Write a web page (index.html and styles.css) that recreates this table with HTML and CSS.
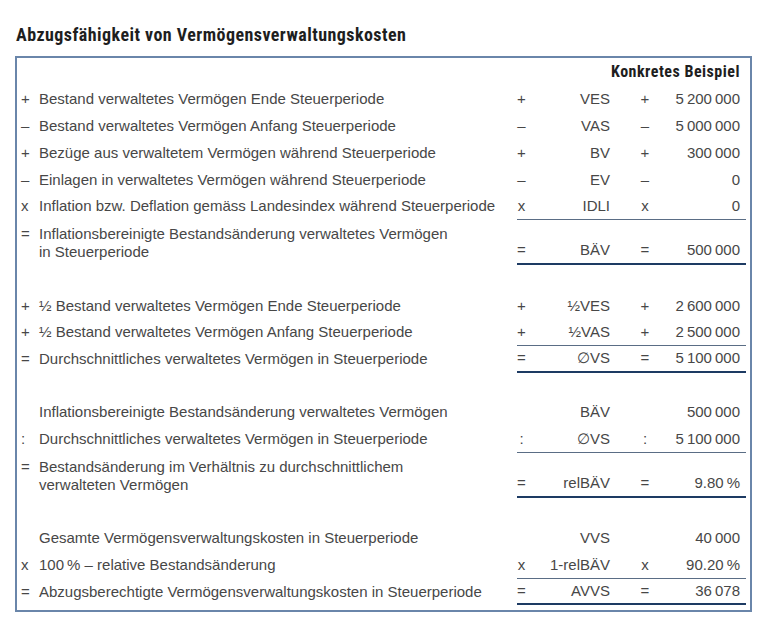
FILE: index.html
```html
<!DOCTYPE html>
<html lang="de">
<head>
<meta charset="utf-8">
<title>Abzugsfähigkeit von Vermögensverwaltungskosten</title>
<link rel="stylesheet" href="styles.css">
</head>
<body>
<h1 class="title">Abzugsfähigkeit von Vermögensverwaltungskosten</h1>
<div class="box">
  <div class="head">Konkretes Beispiel</div>

  <div class="row"><span class="sg">+</span><span class="lbl">Bestand verwaltetes Vermögen Ende Steuerperiode</span>
    <div class="calc"><span class="o1">+</span><span class="sym">VES</span><span class="o2">+</span><span class="val">5&thinsp;200&thinsp;000</span></div></div>
  <div class="row"><span class="sg">–</span><span class="lbl">Bestand verwaltetes Vermögen Anfang Steuerperiode</span>
    <div class="calc"><span class="o1">–</span><span class="sym">VAS</span><span class="o2">–</span><span class="val">5&thinsp;000&thinsp;000</span></div></div>
  <div class="row"><span class="sg">+</span><span class="lbl">Bezüge aus verwaltetem Vermögen während Steuerperiode</span>
    <div class="calc"><span class="o1">+</span><span class="sym">BV</span><span class="o2">+</span><span class="val">300&thinsp;000</span></div></div>
  <div class="row"><span class="sg">–</span><span class="lbl">Einlagen in verwaltetes Vermögen während Steuerperiode</span>
    <div class="calc"><span class="o1">–</span><span class="sym">EV</span><span class="o2">–</span><span class="val">0</span></div></div>
  <div class="row u"><span class="sg">x</span><span class="lbl">Inflation bzw. Deflation gemäss Landesindex während Steuerperiode</span>
    <div class="calc"><span class="o1">x</span><span class="sym">IDLI</span><span class="o2">x</span><span class="val">0</span></div></div>
  <div class="row two uu"><span class="sg">=</span><span class="lbl">Inflationsbereinigte Bestandsänderung verwaltetes Vermögen<br>in Steuerperiode</span>
    <div class="calc"><span class="o1">=</span><span class="sym">BÄV</span><span class="o2">=</span><span class="val">500&thinsp;000</span></div></div>

  <div class="gap g1"></div>

  <div class="row"><span class="sg">+</span><span class="lbl">½ Bestand verwaltetes Vermögen Ende Steuerperiode</span>
    <div class="calc"><span class="o1">+</span><span class="sym">½VES</span><span class="o2">+</span><span class="val">2&thinsp;600&thinsp;000</span></div></div>
  <div class="row u"><span class="sg">+</span><span class="lbl">½ Bestand verwaltetes Vermögen Anfang Steuerperiode</span>
    <div class="calc"><span class="o1">+</span><span class="sym">½VAS</span><span class="o2">+</span><span class="val">2&thinsp;500&thinsp;000</span></div></div>
  <div class="row uu"><span class="sg">=</span><span class="lbl">Durchschnittliches verwaltetes Vermögen in Steuerperiode</span>
    <div class="calc"><span class="o1">=</span><span class="sym">∅VS</span><span class="o2">=</span><span class="val">5&thinsp;100&thinsp;000</span></div></div>

  <div class="gap g2"></div>

  <div class="row"><span class="sg"></span><span class="lbl">Inflationsbereinigte Bestandsänderung verwaltetes Vermögen</span>
    <div class="calc"><span class="o1"></span><span class="sym">BÄV</span><span class="o2"></span><span class="val">500&thinsp;000</span></div></div>
  <div class="row u"><span class="sg">:</span><span class="lbl">Durchschnittliches verwaltetes Vermögen in Steuerperiode</span>
    <div class="calc"><span class="o1">:</span><span class="sym">∅VS</span><span class="o2">:</span><span class="val">5&thinsp;100&thinsp;000</span></div></div>
  <div class="row two uu"><span class="sg">=</span><span class="lbl">Bestandsänderung im Verhältnis zu durchschnittlichem<br>verwalteten Vermögen</span>
    <div class="calc"><span class="o1">=</span><span class="sym">relBÄV</span><span class="o2">=</span><span class="val">9.80&thinsp;%</span></div></div>

  <div class="gap g3"></div>

  <div class="row"><span class="sg"></span><span class="lbl">Gesamte Vermögensverwaltungskosten in Steuerperiode</span>
    <div class="calc"><span class="o1"></span><span class="sym">VVS</span><span class="o2"></span><span class="val">40&thinsp;000</span></div></div>
  <div class="row u"><span class="sg">x</span><span class="lbl">100&thinsp;% – relative Bestandsänderung</span>
    <div class="calc"><span class="o1">x</span><span class="sym">1-relBÄV</span><span class="o2">x</span><span class="val">90.20&thinsp;%</span></div></div>
  <div class="row uu"><span class="sg">=</span><span class="lbl">Abzugsberechtigte Vermögensverwaltungskosten in Steuerperiode</span>
    <div class="calc"><span class="o1">=</span><span class="sym">AVVS</span><span class="o2">=</span><span class="val">36&thinsp;078</span></div></div>
</div>
</body>
</html>
```
FILE: styles.css
```css
html, body {
  margin: 0;
  padding: 0;
  background: #ffffff;
}

body {
  font-family: "Liberation Sans", Arial, sans-serif;
  font-size: 15px;
  color: #474747;
}

.title {
  margin: 0 0 0 16px;
  padding-top: 24px;
  font-family: "Roboto Condensed", "Liberation Sans", sans-serif;
  font-weight: 700;
  font-size: 18px;
  letter-spacing: 0.45px;
  line-height: 22px;
  color: #1e1e1e;
}

.box {
  margin: 10px 0 0 15px;
  width: 737px;
  box-sizing: border-box;
  border: 2px solid #6a86aa;
  padding: 0 4px 5px 4px;
}

.head {
  height: 28px;
  line-height: 28px;
  text-align: right;
  padding-right: 6px;
  font-family: "Roboto Condensed", "Liberation Sans", sans-serif;
  font-weight: 700;
  font-size: 16px;
  letter-spacing: 0.5px;
  color: #1e1e1e;
}

.row {
  display: grid;
  grid-template-columns: 18px 1fr 229px;
  height: 26.75px;
  box-sizing: border-box;
  line-height: 18px;
}

.sg,
.lbl {
  align-self: center;
  white-space: nowrap;
}

.calc {
  display: grid;
  grid-template-columns: 9px 84px 60px 1fr;
  align-items: center;
  box-sizing: border-box;
  height: 26.75px;
  padding-right: 6px;
  white-space: nowrap;
  align-self: end;
}

.o1 {
  text-align: center;
}

.sym {
  text-align: right;
}

.o2 {
  text-align: center;
  padding-left: 10px;
}

.val {
  text-align: right;
}

.row.u .calc {
  border-bottom: 1px solid #5a6d85;
}

.row.uu .calc {
  border-bottom: 2px solid #1d3b63;
}

.row.two {
  height: 45px;
}

.row.two .sg,
.row.two .lbl {
  align-self: start;
  padding-top: 5px;
}

.gap.g1 { height: 27.5px; }
.gap.g2 { height: 26.5px; }
.gap.g3 { height: 27.5px; }
```
